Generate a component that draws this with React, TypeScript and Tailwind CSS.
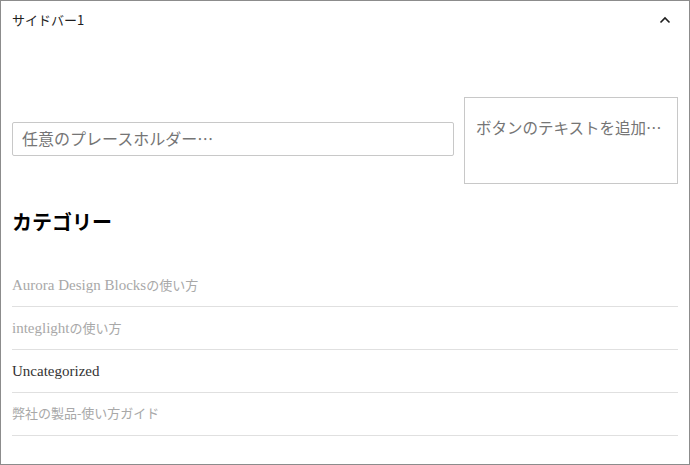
import React from 'react'

const serif = { fontFamily: '"Liberation Serif", "Noto Sans CJK JP", serif' }

type Seg = { t: string; latin?: boolean }

const categories: { parts: Seg[]; active: boolean }[] = [
  { parts: [{ t: 'Aurora Design Blocks', latin: true }, { t: 'の使い方' }], active: false },
  { parts: [{ t: 'integlight', latin: true }, { t: 'の使い方' }], active: false },
  { parts: [{ t: 'Uncategorized', latin: true }], active: true },
  { parts: [{ t: '弊社の製品-使い方ガイド' }], active: false },
]

export default function App() {
  return (
    <div className="h-[465px] w-[690px] bg-white border border-[#8c8c8c] overflow-hidden">
      {/* Panel header */}
      <div
        className="flex h-[38px] items-center justify-between pl-[11px] pr-[18px]"
        style={{ fontFamily: '"Noto Sans CJK JP", sans-serif' }}
      >
        <span className="text-[13px] text-[#1e1e1e]">サイドバー1</span>
        <svg width="12" height="8" viewBox="0 0 12 8" fill="none">
          <path d="M1.5 6.5 6 2l4.5 4.5" stroke="#1e1e1e" strokeWidth="1.6" />
        </svg>
      </div>

      <div className="px-[11px]" style={serif}>
        {/* Search */}
        <div className="mt-[58px] flex items-start gap-[10px]">
          <div className="mt-[25px] flex h-[34px] flex-1 items-center rounded-[2px] border border-[#c8c8c8] px-[9px]">
            <span className="text-[16px] text-[#757575]">
              任意のプレースホルダー<span style={{ fontFamily: '"Noto Sans CJK JP", sans-serif' }}>…</span>
            </span>
          </div>
          <div className="flex h-[87px] w-[214px] items-start border border-[#c8c8c8] pl-[11px] pt-[18px]">
            <span className="whitespace-nowrap text-[15.5px] text-[#757575]">
              ボタンのテキストを追加<span style={{ fontFamily: '"Noto Sans CJK JP", sans-serif' }}>…</span>
            </span>
          </div>
        </div>

        {/* Categories */}
        <h2 className="mt-[24px] text-[20px] font-bold leading-[30px] text-black">カテゴリー</h2>
        <ul className="mt-[26px]">
          {categories.map((c, i) => (
            <li
              key={i}
              className={`flex h-[43px] items-center border-b border-[#e0e0e0] text-[13px] ${
                c.active ? 'text-[#333333]' : 'text-[#a8a8a8]'
              }`}
            >
              <span>
                {c.parts.map((p, j) => (
                  <span key={j} className={p.latin ? 'text-[15px]' : ''}>
                    {p.t}
                  </span>
                ))}
              </span>
            </li>
          ))}
        </ul>
      </div>
    </div>
  )
}
